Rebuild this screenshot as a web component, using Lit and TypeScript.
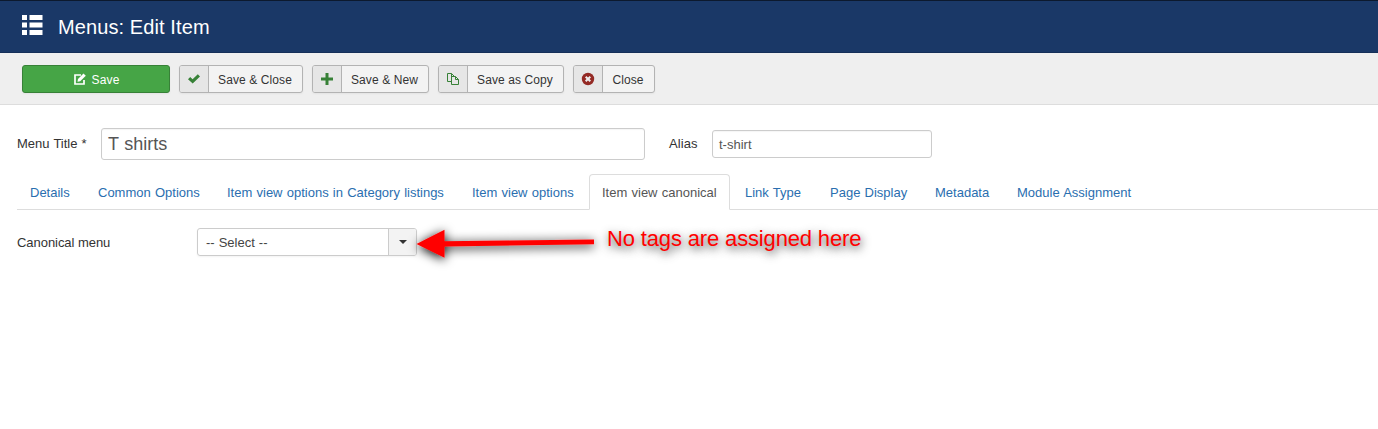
import { LitElement, html, css, svg } from "lit";
import { customElement } from "lit/decorators.js";
import { classMap } from "lit/directives/class-map.js";

const icons = {
  check: svg`<path d="M1 7.200 3.200 5 5.600 7.300 10.800 2.200 13 4.400 5.700 11.500Z" fill="#378137"/>`,
  plus: svg`<path d="M5.500 1h3v4.500H13v3H8.500V13h-3V8.500H1v-3h4.500z" fill="#378137"/>`,
  copy: svg`<g fill="none" stroke="#378137"><path d="M5 9.500H1.500V1.500H5.500L8.500 4.500"/><path d="M5.500 1.500V12.500H12.500V7.500L9.500 4.500H5.500"/><path d="M9.500 4.500V7.500H12.500"/></g>`,
  cancel: svg`<circle cx="7" cy="7" r="6.200" fill="#942a25"/><path d="M4.700 4.700 9.300 9.300M9.300 4.700 4.700 9.300" stroke="#eee" stroke-width="2" fill="none"/>`,
};

const actions = [
  { label: "Save & Close", icon: icons.check, width: 124 },
  { label: "Save & New", icon: icons.plus, width: 117 },
  { label: "Save as Copy", icon: icons.copy, width: 126 },
  { label: "Close", icon: icons.cancel, width: 82 },
];

const tabs = [
  { label: "Details", width: 66 },
  { label: "Common Options", width: 127 },
  { label: "Item view options in Category listings", width: 243 },
  { label: "Item view options", width: 128 },
  { label: "Item view canonical", width: 141, active: true },
  { label: "Link Type", width: 83 },
  { label: "Page Display", width: 103 },
  { label: "Metadata", width: 80 },
  { label: "Module Assignment", width: 141 },
];

@customElement("app-root")
export class AppRoot extends LitElement {
  static styles = css`
    :host {
      display: block;
      position: relative;
      height: 429px;
      overflow: hidden;
      background: #fff;
      color: #333;
      font: 13px/18px "Liberation Sans", Arial, sans-serif;
    }
    * { box-sizing: border-box; }
    svg { display: block; }
    .header {
      display: flex;
      height: 53px;
      padding: 1px 0 0 22px;
      border-top: 1px solid #0c192e;
      border-bottom: 1px solid #152f58;
      background: #1a3867;
      color: #fff;
    }
    .header svg { margin-top: 13px; }
    h1 {
      margin: 8px 0 0 15px;
      font-size: 20px;
      font-weight: 400;
      line-height: 34px;
      letter-spacing: 0.1px;
    }
    .toolbar {
      display: flex;
      gap: 9px;
      height: 52px;
      padding: 12px 0 0 22px;
      border-bottom: 1px solid #ddd;
      background: #efefef;
    }
    .btn {
      display: flex;
      height: 28px;
      padding: 0;
      border: 1px solid #b3b3b3;
      border-radius: 3px;
      background: #f3f3f3;
      color: #333;
      font: 12px/28px "Liberation Sans", Arial, sans-serif;
      letter-spacing: 0.1px;
      overflow: hidden;
      box-shadow: 0 1px 2px rgba(0, 0, 0, 0.05);
    }
    .save {
      width: 148px;
      justify-content: center;
      align-items: center;
      gap: 5px;
      padding-left: 2px;
      border-color: #378137;
      background: #46a546;
      color: #fff;
      letter-spacing: 0.2px;
    }
    .save span { padding-top: 1px; }
    .btn-icon {
      width: 29px;
      height: 26px;
      padding: 6px 0 0 7px;
      border-right: 1px solid #b3b3b3;
      background: #e6e6e6;
    }
    .btn-label { flex: 1; padding-right: 1px; text-align: center; white-space: nowrap; }
    .titles {
      display: flex;
      align-items: center;
      height: 32px;
      margin: 23px 0 0 17px;
      white-space: nowrap;
      word-spacing: 0.5px;
    }
    .title-label { width: 84px; }
    .alias-label { width: 43px; margin-left: 24px; letter-spacing: 0.1px; }
    .field {
      border: 1px solid #ccc;
      border-radius: 3px;
      color: #555;
      background: #fff;
      box-shadow: inset 0 1px 1px rgba(0, 0, 0, 0.04);
    }
    .large { width: 544px; height: 32px; padding: 0 6px; font-size: 18px; line-height: 30px; }
    .small { width: 220px; height: 28px; padding: 1px 6px; line-height: 26px; }
    .tabs {
      display: flex;
      gap: 2px;
      height: 36px;
      margin: 14px 0 0 17px;
      border-bottom: 1px solid #ddd;
      word-spacing: 0.6px;
    }
    .tab {
      height: 36px;
      padding: 10px 0 0 13px;
      color: #2a6eaf;
      white-space: nowrap;
    }
    .tab.active {
      padding: 9px 0 0 12px;
      border: 1px solid #ddd;
      border-bottom-color: #fff;
      border-radius: 4px 4px 0 0;
      background: #fff;
      color: #555;
    }
    .row {
      display: flex;
      align-items: center;
      height: 28px;
      margin: 18px 0 0 17px;
    }
    .row-label { width: 180px; padding-top: 2px; letter-spacing: -0.05px; }
    .select {
      display: flex;
      width: 220px;
      height: 28px;
      border: 1px solid #ccc;
      border-radius: 3px;
      overflow: hidden;
      color: #444;
      line-height: 28px;
      box-shadow: 0 1px 2px rgba(0, 0, 0, 0.05);
    }
    .value { flex: 1; padding-left: 8px; word-spacing: 0.4px; }
    .arrow {
      width: 28px;
      padding: 11px 0 0 10px;
      border-left: 1px solid #ccc;
      background: #f3f3f3;
    }
    .pointer { position: absolute; left: 397px; top: 210px; }
    .note {
      position: absolute;
      left: 607px;
      top: 226px;
      color: #f00;
      font-size: 22px;
      line-height: 26px;
      letter-spacing: -0.15px;
      white-space: nowrap;
      text-shadow: 1px 3px 10px rgba(0, 0, 0, 0.8);
    }
  `;

  render() {
    return html`
      <header class="header">
        <svg width="21" height="20" fill="#fff">
          <path d="M0 0h5v5H0zM7.500 0h13v5h-13zM0 7.500h5v5H0zM7.500 7.500h13v5h-13zM0 15h5v5H0zM7.500 15h13v5h-13z" />
        </svg>
        <h1>Menus: Edit Item</h1>
      </header>
      <div class="toolbar">
        <button class="btn save">
          <svg width="12" height="12" viewBox="0 0 12 12">
            <path d="M7 2H1v9h9V7" fill="none" stroke="#fff" stroke-width="1.700" />
            <path d="M3.500 8.700 4 6 9.500.400 11.800 2.700 6.200 8.200Z" fill="#fff" />
          </svg>
          <span>Save</span>
        </button>
        ${actions.map((a) => html`
          <button class="btn" style="width:${a.width}px">
            <span class="btn-icon"><svg width="14" height="14">${a.icon}</svg></span>
            <span class="btn-label">${a.label}</span>
          </button>`)}
      </div>
      <div class="titles">
        <label class="title-label">Menu Title *</label>
        <div class="field large">T shirts</div>
        <label class="alias-label">Alias</label>
        <div class="field small">t-shirt</div>
      </div>
      <nav class="tabs">
        ${tabs.map((t) => html`
          <a class=${classMap({ tab: true, active: !!t.active })} style="width:${t.width}px">${t.label}</a>`)}
      </nav>
      <div class="row">
        <label class="row-label">Canonical menu</label>
        <div class="select">
          <span class="value">-- Select --</span>
          <span class="arrow"><svg width="8" height="5"><path d="M0 0h8L4 4z" fill="#333" /></svg></span>
        </div>
      </div>
      <svg class="pointer" width="220" height="70">
        <defs>
          <filter id="shadow" x="-20%" y="-80%" width="140%" height="280%">
            <feDropShadow dx="0" dy="2" stdDeviation="5.500" flood-color="#000" flood-opacity="1" />
          </filter>
        </defs>
        <path filter="url(#shadow)" fill="#f00" d="M19.500 34 47.500 19.700V31.300L197 29.500V34.300L47.500 36.500V47.700Z" />
      </svg>
      <div class="note">No tags are assigned here</div>
    `;
  }
}
